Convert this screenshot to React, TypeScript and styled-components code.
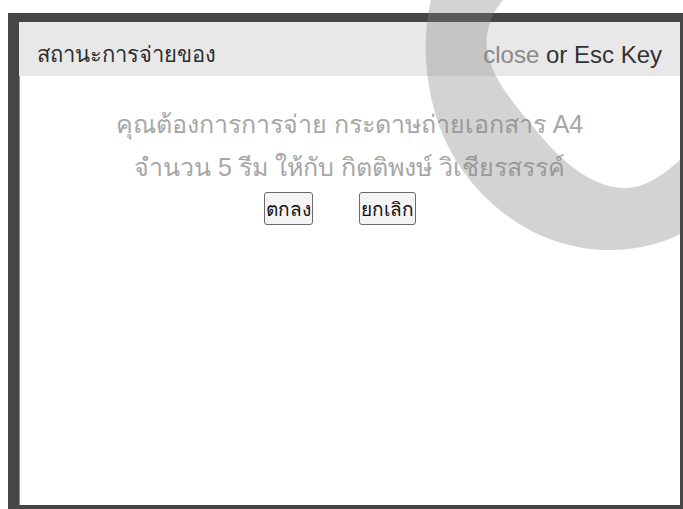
import React from "react";
import styled, { createGlobalStyle } from "styled-components";

const GlobalStyle = createGlobalStyle`
  html, body {
    margin: 0;
    padding: 0;
    background: #ffffff;
    overflow: hidden;
  }
  body {
    font-family: "Liberation Sans", Arial, "Noto Sans", sans-serif;
  }
`;

const Page = styled.div`
  position: relative;
  width: 683px;
  height: 509px;
  padding: 13px 0 0 8px;
  box-sizing: border-box;
  overflow: hidden;
`;

const Dialog = styled.div`
  box-sizing: border-box;
  width: 675px;
  height: 496px;
  border-style: solid;
  border-color: #464646;
  border-width: 9px 3px 4px 11px;
  background: #ffffff;
  box-shadow: inset 1px 0 0 #8d8d8d;
  display: flex;
  flex-direction: column;
`;

const Header = styled.div`
  box-sizing: border-box;
  height: 54px;
  flex: none;
  background: #e8e8e8;
  display: flex;
  align-items: center;
  justify-content: space-between;
  padding: 11px 18px 0;
`;

const Title = styled.div`
  font-size: 22px;
  color: #2e2e2e;
`;

const CloseHint = styled.div`
  font-size: 24px;
  color: #333333;
`;

const Muted = styled.span`
  color: #8a8a8a;
`;

const Body = styled.div`
  flex: 1;
  display: flex;
  flex-direction: column;
  align-items: center;
  padding-top: 27px;
`;

const Message = styled.div`
  font-size: 25px;
  line-height: 43px;
  color: #a6a6a6;
  text-align: center;
`;

const Actions = styled.div`
  display: flex;
  gap: 46px;
  margin: 3px 20px 0 0;
`;

const Button = styled.button`
  font-family: inherit;
  font-size: 19px;
  color: #111111;
  background: #f4f4f4;
  border: 1px solid #6a6a6a;
  border-radius: 3px;
  height: 33px;
  padding: 0 1px;
`;

const Ring = styled.svg`
  position: absolute;
  left: 0;
  top: 0;
  width: 683px;
  height: 509px;
  pointer-events: none;
`;

export default function App() {
  return (
    <>
      <GlobalStyle />
      <Page>
        <Dialog>
          <Header>
            <Title>สถานะการจ่ายของ</Title>
            <CloseHint>
              <Muted>close</Muted> or Esc Key
            </CloseHint>
          </Header>
          <Body>
            <Message>
              คุณต้องการการจ่าย กระดาษถ่ายเอกสาร A4
              <br />
              จำนวน 5 รีม ให้กับ กิตติพงษ์ วิเชียรสรรค์
            </Message>
            <Actions>
              <Button>ตกลง</Button>
              <Button>ยกเลิก</Button>
            </Actions>
          </Body>
        </Dialog>
        <Ring viewBox="0 0 683 509">
          <path
            d="M431 0 C420 45 426 105 450 150 C482 210 545 252 615 250 C642 249 662 243 680 234 L680 160 C662 176 645 188 625 188 C595 188 565 165 540 135 C515 105 492 80 487 50 C484 30 494 10 503 0 Z"
            fill="rgba(128,128,128,0.35)"
          />
        </Ring>
      </Page>
    </>
  );
}
